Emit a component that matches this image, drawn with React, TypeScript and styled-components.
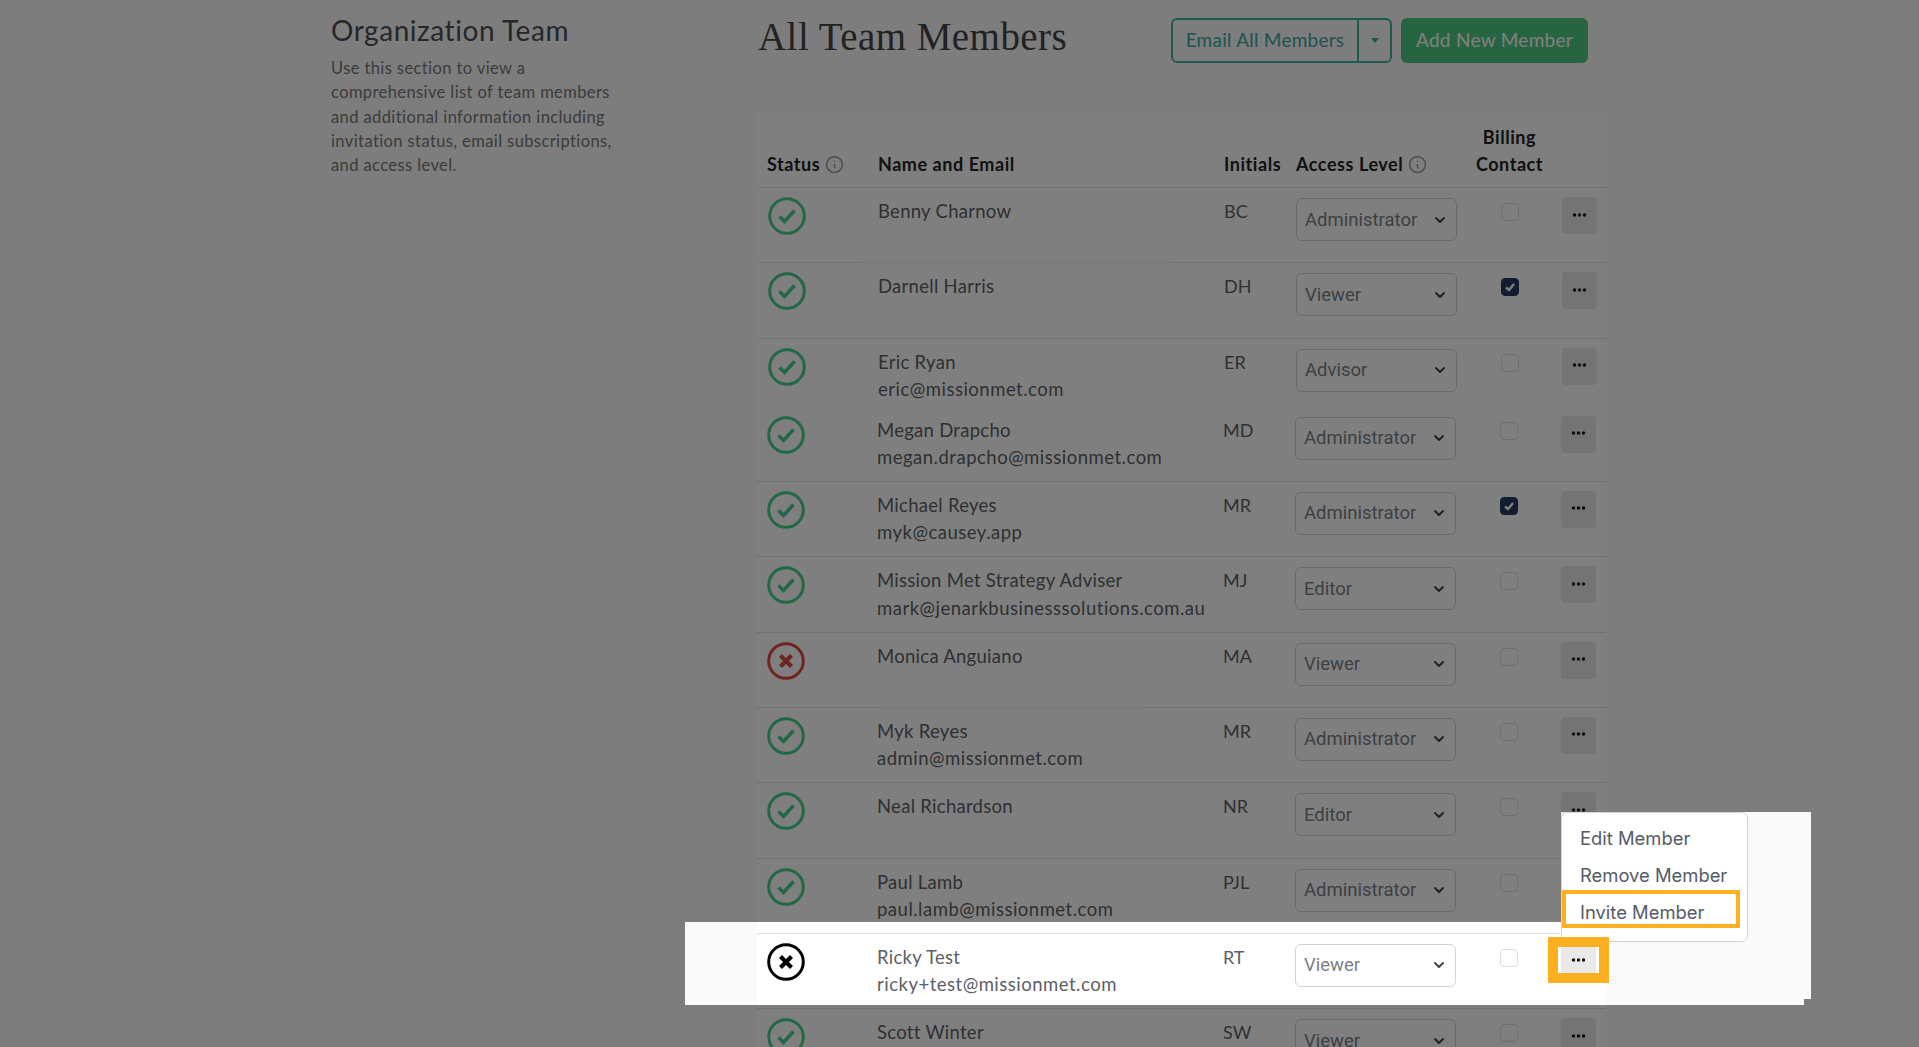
import React from "react";
import styled, { createGlobalStyle } from "styled-components";
import { ChevronDown, Info } from "lucide-react";

const Global = createGlobalStyle`
  html, body { margin: 0; padding: 0; height: 1047px; overflow: hidden; background: #fafafa; }
  * { box-sizing: border-box; }
  body { font-family: Lato, "Open Sans", sans-serif; }
`;

const Page = styled.div`
  display: grid;
  grid-template-columns: 427px 849px;
  padding-left: 330px;
  height: 1047px;
  overflow: hidden;
`;
const Side = styled.aside`
  padding: 13px 0 0 1px;
`;
const SideTitle = styled.h2`
  margin: 0 0 9px;
  font-size: 28px;
  line-height: 34px;
  font-weight: 400;
  color: #4c4f55;
  letter-spacing: 0.55px;
`;
const SideText = styled.p`
  margin: 0;
  width: 290px;
  font-size: 16.5px;
  line-height: 24.3px;
  color: #777;
  letter-spacing: 0.4px;
`;
const Main = styled.main``;
const TopBar = styled.div`
  display: flex;
  align-items: flex-start;
  height: 113px;
  padding: 18px 18px 0 1px;
`;
const PageTitle = styled.h1`
  margin: 0 auto 0 0;
  font-family: "Liberation Serif", serif;
  font-size: 39px;
  line-height: 38px;
  font-weight: 400;
  letter-spacing: 0.45px;
  color: #444;
`;
const SplitGroup = styled.div`
  display: flex;
  height: 45px;
  margin-right: 9px;
  border: 2px solid #3fb5a5;
  border-radius: 6px;
  color: #3fa89a;
  font-size: 19px;
  letter-spacing: 0.25px;
`;
const SplitMain = styled.div`
  width: 186px;
  display: flex;
  align-items: center;
  justify-content: center;
  padding-bottom: 2px;
  border-right: 2px solid #3fb5a5;
`;
const SplitCaret = styled.div`
  width: 31px;
  display: flex;
  align-items: center;
  justify-content: center;
  &::before {
    content: "";
    border-top: 5px solid #3fa89a;
    border-left: 4.5px solid transparent;
    border-right: 4.5px solid transparent;
  }
`;
const AddButton = styled.div`
  width: 187px;
  height: 45px;
  padding-bottom: 2px;
  border-radius: 6px;
  background: #4fcb85;
  color: #fff;
  font-size: 19px;
  letter-spacing: 0.3px;
  display: flex;
  align-items: center;
  justify-content: center;
`;
const Table = styled.div`
  background: #fff;
  height: 940px;
`;
const HeaderRow = styled.div`
  display: grid;
  grid-template-columns: 111px 346px 72px 161px 105px 35px;
  align-items: end;
  height: 75px;
  padding: 0 0 9px 9px;
  margin-left: 1px;
  margin-right: -1px;
  border-bottom: 1px solid #dee2e6;
  font-size: 18px;
  line-height: 27px;
  font-weight: 700;
  letter-spacing: 0.55px;
  color: #222;
`;
const HeadCell = styled.div<{ $center?: boolean }>`
  display: flex;
  align-items: center;
  gap: 5px;
  white-space: nowrap;
  text-align: ${(p) => (p.$center ? "center" : "left")};
  justify-content: ${(p) => (p.$center ? "center" : "flex-start")};
`;
const HelpIcon = styled(Info)`
  width: 19px;
  height: 19px;
  color: #a0a0a0;
  stroke-width: 2;
`;
const Row = styled.div<{ $upper?: boolean; $short?: boolean; $fadeFrom?: number; $fadeTo?: number; $noLine?: boolean }>`
  position: relative;
  display: grid;
  grid-template-columns: 111px 346px 72px 161px 105px 35px;
  align-items: start;
  height: ${(p) => (p.$short ? "68px" : "75.33px")};
  padding: 10px 0 0 9px;
  margin-left: ${(p) => (p.$upper ? "1px" : "0")};
  margin-right: ${(p) => (p.$upper ? "-1px" : "0")};
  border-bottom: ${(p) => (p.$noLine ? "none" : "1px solid #dee2e6")};
  ${(p) =>
    p.$fadeFrom !== undefined
      ? `&::after {
           content: "";
           position: absolute;
           left: ${p.$fadeFrom}px;
           width: ${(p.$fadeTo ?? 0) - p.$fadeFrom}px;
           bottom: -1px;
           height: 1px;
           background: #f0f2f4;
         }`
      : ""}
`;
const StatusCell = styled.div`
  width: 38px;
  height: 38px;
  margin: -1px 0 0 1px;
`;
const StatusSvg = styled.svg<{ $tone: string }>`
  display: block;
  width: 38px;
  height: 38px;
  fill: none;
  stroke: ${(p) => p.$tone};
`;
const Person = styled.div`
  font-size: 18.5px;
  line-height: 27.5px;
  color: #5c6066;
  white-space: nowrap;
  letter-spacing: 0.28px;
`;
const Email = styled.div`
  letter-spacing: 0.5px;
`;
const Initials = styled.div`
  font-size: 18px;
  line-height: 27.5px;
  color: #5c6066;
`;
const SelectBox = styled.div`
  width: 161px;
  height: 43px;
  display: flex;
  align-items: center;
  justify-content: space-between;
  padding: 0 8px 0 8px;
  border: 1.5px solid #ced4da;
  border-radius: 6px;
  background: #fff;
  color: #7b8087;
  font-family: Roboto, sans-serif;
  font-size: 18.5px;
`;
const Chevron = styled(ChevronDown)`
  width: 16px;
  height: 16px;
  color: #444;
  stroke-width: 3;
`;
const CheckCell = styled.div`
  display: flex;
  justify-content: center;
  padding-top: 5px;
`;
const CheckBox = styled.div<{ $on?: boolean }>`
  width: 18px;
  height: 18px;
  border-radius: 4px;
  border: 1.5px solid ${(p) => (p.$on ? "#263a63" : "#dadee4")};
  background: ${(p) => (p.$on ? "#263a63" : "#fff")};
  display: flex;
  align-items: center;
  justify-content: center;
`;
const Tick = styled.svg`
  width: 12px;
  height: 12px;
  fill: none;
  stroke: #fff;
  stroke-width: 2.5;
`;
const DotsButton = styled.div`
  width: 35px;
  height: 37px;
  margin-top: -1px;
  border-radius: 4px;
  background: #e9e9e9;
  display: flex;
  align-items: center;
  justify-content: center;
  padding-bottom: 2px;
`;
const Dots = styled.svg`
  width: 15px;
  height: 4px;
  fill: #111;
`;
const Backdrop = styled.div`
  position: fixed;
  inset: 0;
  background: rgba(0, 0, 0, 0.5);
  clip-path: polygon(
    evenodd,
    0 0, 1919px 0, 1919px 1047px, 0 1047px, 0 0,
    1561px 812px, 1811px 812px, 1811px 999px, 1804px 999px, 1804px 1005px,
    685px 1005px, 685px 922px, 1561px 922px, 1561px 812px, 0 0
  );
`;
const Menu = styled.div`
  position: fixed;
  left: 1561px;
  top: 812px;
  width: 187px;
  height: 130px;
  padding-top: 7px;
  background: #fff;
  border: 1px solid #d3d3d3;
  border-radius: 6px;
`;
const MenuItem = styled.div`
  height: 36.7px;
  padding-left: 18px;
  display: flex;
  align-items: center;
  font-family: Inter, sans-serif;
  font-size: 18.4px;
  color: #555b68;
`;
const Marker = styled.div<{ $w: number }>`
  position: fixed;
  border: ${(p) => p.$w}px solid #ffb020;
`;
const InviteMarker = styled(Marker)`
  left: 1562px;
  top: 890px;
  width: 178px;
  height: 38px;
`;
const DotsMarker = styled(Marker)`
  left: 1548px;
  top: 937px;
  width: 61px;
  height: 46px;
`;

type Member = {
  name: string;
  email?: string;
  initials: string;
  level: string;
  billing?: boolean;
  status?: "ok" | "bad" | "dark";
  upper?: boolean;
  short?: boolean;
  noLine?: boolean;
  fade?: [number, number];
};

const members: Member[] = [
  { name: "Benny Charnow", initials: "BC", level: "Administrator", upper: true, fade: [101, 413] },
  { name: "Darnell Harris", initials: "DH", level: "Viewer", billing: true, upper: true },
  { name: "Eric Ryan", email: "eric@missionmet.com", initials: "ER", level: "Advisor", upper: true, short: true, noLine: true },
  { name: "Megan Drapcho", email: "megan.drapcho@missionmet.com", initials: "MD", level: "Administrator" },
  { name: "Michael Reyes", email: "myk@causey.app", initials: "MR", level: "Administrator", billing: true },
  { name: "Mission Met Strategy Adviser", email: "mark@jenarkbusinesssolutions.com.au", initials: "MJ", level: "Editor" },
  { name: "Monica Anguiano", initials: "MA", level: "Viewer", status: "bad", fade: [119, 387] },
  { name: "Myk Reyes", email: "admin@missionmet.com", initials: "MR", level: "Administrator" },
  { name: "Neal Richardson", initials: "NR", level: "Editor" },
  { name: "Paul Lamb", email: "paul.lamb@missionmet.com", initials: "PJL", level: "Administrator" },
  { name: "Ricky Test", email: "ricky+test@missionmet.com", initials: "RT", level: "Viewer", status: "dark" },
  { name: "Scott Winter", initials: "SW", level: "Viewer" },
];

const tones = { ok: "#46d08a", bad: "#e0483e", dark: "#000" };

function StatusIcon({ status = "ok" }: { status?: "ok" | "bad" | "dark" }) {
  return (
    <StatusSvg $tone={tones[status]} viewBox="0 0 38 38">
      <circle cx="19" cy="19" r="17.3" strokeWidth="3" />
      {status === "ok" ? (
        <path d="M11.5 19.5 L16.5 24.5 L26.5 13.5" strokeWidth="3.6" />
      ) : (
        <path d="M13.5 13.5 L24.5 24.5 M24.5 13.5 L13.5 24.5" strokeWidth="4.2" />
      )}
    </StatusSvg>
  );
}

export default function App() {
  return (
    <>
      <Global />
      <Page>
        <Side>
          <SideTitle>Organization Team</SideTitle>
          <SideText>
            Use this section to view a comprehensive list of team members and additional information including
            invitation status, email subscriptions, and access level.
          </SideText>
        </Side>
        <Main>
          <TopBar>
            <PageTitle>All Team Members</PageTitle>
            <SplitGroup>
              <SplitMain>Email All Members</SplitMain>
              <SplitCaret />
            </SplitGroup>
            <AddButton>Add New Member</AddButton>
          </TopBar>
          <Table>
            <HeaderRow>
              <HeadCell>
                Status <HelpIcon />
              </HeadCell>
              <HeadCell>Name and Email</HeadCell>
              <HeadCell>Initials</HeadCell>
              <HeadCell>
                Access Level <HelpIcon />
              </HeadCell>
              <HeadCell $center>
                <div>
                  Billing
                  <br />
                  Contact
                </div>
              </HeadCell>
              <div />
            </HeaderRow>
            {members.map((m) => (
              <Row
                key={m.name}
                $upper={m.upper}
                $short={m.short}
                $noLine={m.noLine}
                $fadeFrom={m.fade?.[0]}
                $fadeTo={m.fade?.[1]}
              >
                <StatusCell>
                  <StatusIcon status={m.status} />
                </StatusCell>
                <Person>
                  {m.name}
                  {m.email && <Email>{m.email}</Email>}
                </Person>
                <Initials>{m.initials}</Initials>
                <SelectBox>
                  {m.level}
                  <Chevron />
                </SelectBox>
                <CheckCell>
                  <CheckBox $on={m.billing}>
                    {m.billing && (
                      <Tick viewBox="0 0 12 12">
                        <path d="M2 6.5 L5 9 L10 3" />
                      </Tick>
                    )}
                  </CheckBox>
                </CheckCell>
                <DotsButton>
                  <Dots viewBox="0 0 15 4">
                    <circle cx="2.5" cy="2" r="1.7" />
                    <circle cx="7.5" cy="2" r="1.7" />
                    <circle cx="12.5" cy="2" r="1.7" />
                  </Dots>
                </DotsButton>
              </Row>
            ))}
          </Table>
        </Main>
      </Page>
      <Backdrop />
      <Menu>
        <MenuItem>Edit Member</MenuItem>
        <MenuItem>Remove Member</MenuItem>
        <MenuItem>Invite Member</MenuItem>
      </Menu>
      <InviteMarker $w={4} />
      <DotsMarker $w={10} />
    </>
  );
}
